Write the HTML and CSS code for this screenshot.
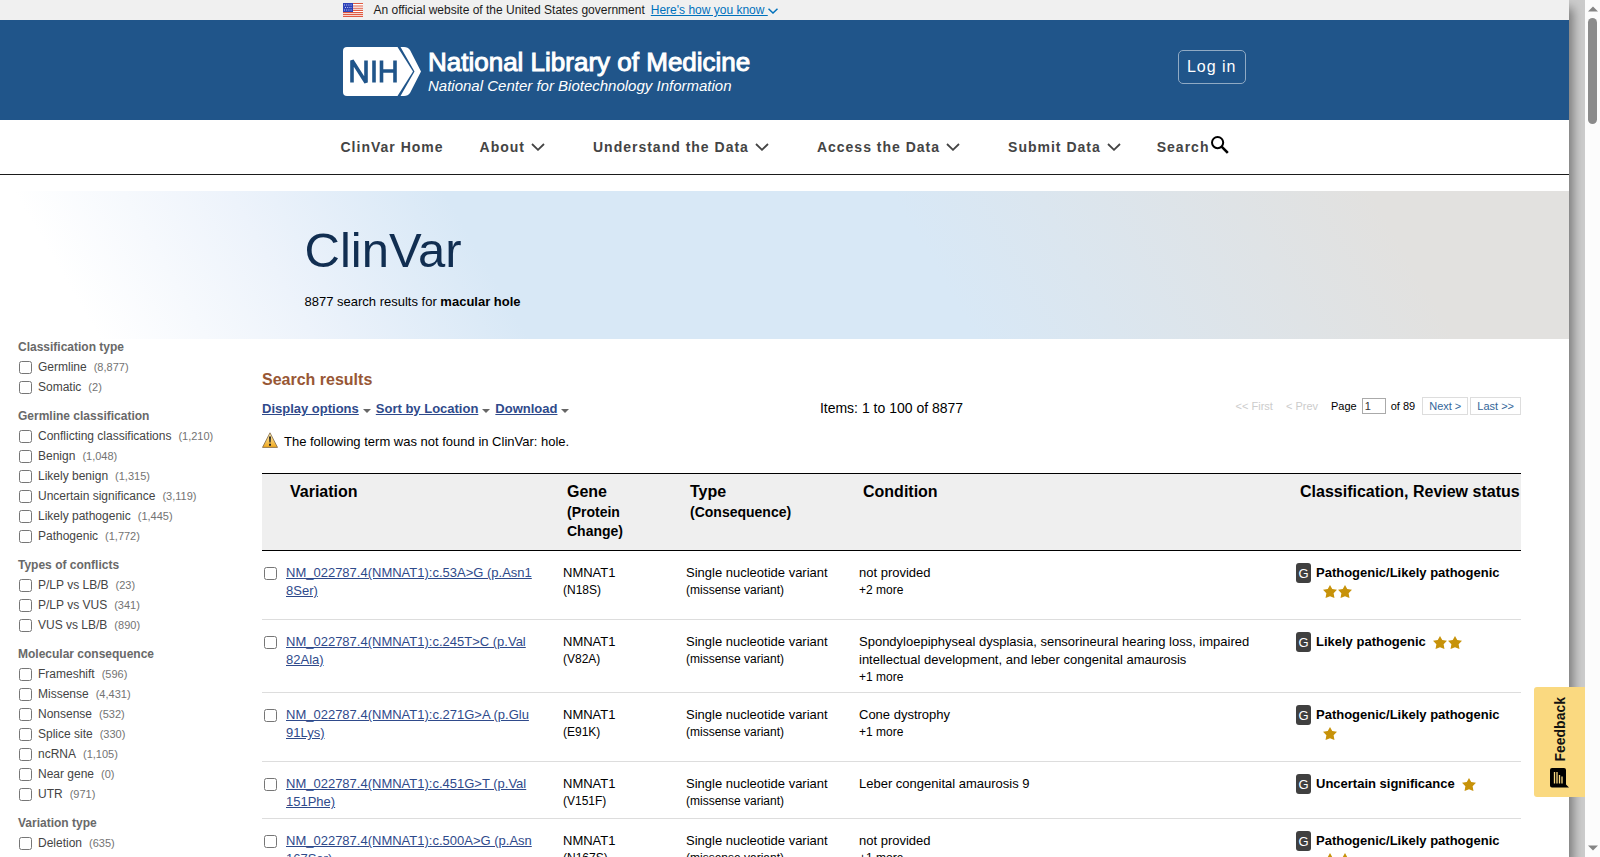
FILE: index.html
```html
<!DOCTYPE html>
<html lang="en">

<head>
    <meta charset="UTF-8">
    <meta name="viewport" content="width=device-width, initial-scale=1.0">
    <title>macular hole - ClinVar - NCBI</title>
    <link rel="stylesheet" href="styles.css">
</head>

<body>
    <svg class="defs" aria-hidden="true">
        <symbol id="star" viewBox="0 0 15 14">
            <path d="M7.5 0 L9.9 4.4 L15 5.2 L11.4 8.8 L12.3 14 L7.5 12 L2.7 14 L3.6 8.8 L0 5.2 L5.1 4.4Z" fill="#c79209" />
        </symbol>
        <symbol id="chevron" viewBox="0 0 14 8">
            <path d="M1 1 L7 6.8 L13 1" fill="none" stroke="currentColor" stroke-width="1.8" />
        </symbol>
        <symbol id="chevron-small" viewBox="0 0 10 6">
            <path d="M.5 .7 L5 5 L9.5 .7" fill="none" stroke="currentColor" stroke-width="1.5" />
        </symbol>
    </svg>

    <div class="page">
        <div class="banner">
            <div class="container">
                <svg class="flag" viewBox="0 0 20 14" aria-hidden="true">
                    <rect width="20" height="14" fill="#fff" />
                    <path d="M0 .5h20M0 3h20M0 5.2h20M0 7.4h20M0 9.6h20M0 11.6h20M0 13.5h20" stroke="#e05a42" stroke-width="1.1" />
                    <rect width="10" height="9" fill="#2c41b8" />
                    <path d="M1 2h8M2 4.5h7M1 7h8" stroke="#c5cbf0" stroke-dasharray="1 1.2" />
                </svg>
                <span>An official website of the United States government</span>
                <a href="#how">Here's how you know <svg class="know-chevron" aria-hidden="true"><use href="#chevron-small" /></svg></a>
            </div>
        </div>

        <header class="header">
            <div class="container">
                <a href="#home" class="logo" aria-label="NCBI home">
                    <svg viewBox="0 0 420 50" width="420" height="50" aria-hidden="true">
                        <path d="M4 0H54.5L70 24.5L54.5 49H4Q0 49 0 45V4Q0 0 4 0Z" fill="#fff" />
                        <path d="M57.5 0H61Q65 0 67 3L78 24.5L67 46Q65 49 61 49H57.5L71.5 24.5Z" fill="#fff" />
                        <path d="M9 35.5V13.5L23 35.5V13.5M31 13.5V35.5M38.5 13.5V35.5M52 13.5V35.5M38.5 24H52" fill="none" stroke="#20558a" stroke-width="3.6" stroke-linejoin="bevel" />
                        <text class="logo-title" x="85" y="24">National Library of Medicine</text>
                        <text class="logo-sub" x="85" y="44">National Center for Biotechnology Information</text>
                    </svg>
                </a>
                <button type="button" class="login">Log in</button>
            </div>
        </header>

        <nav class="nav">
            <div class="container">
                <a href="#clinvar">ClinVar Home</a>
                <a href="#about" class="drop">About <svg aria-hidden="true"><use href="#chevron" /></svg></a>
                <a href="#understand" class="drop">Understand the Data <svg aria-hidden="true"><use href="#chevron" /></svg></a>
                <a href="#access" class="drop">Access the Data <svg aria-hidden="true"><use href="#chevron" /></svg></a>
                <a href="#submit" class="drop">Submit Data <svg aria-hidden="true"><use href="#chevron" /></svg></a>
                <a href="#search" class="search">Search<svg viewBox="0 0 18 18" aria-hidden="true">
                        <circle cx="6.6" cy="6.6" r="5.6" fill="none" stroke="#000" stroke-width="2" />
                        <path d="M10.6 10.6 L16.8 16.8" stroke="#000" stroke-width="2.6" />
                    </svg></a>
            </div>
        </nav>

        <div class="hero">
            <div class="container">
                <h1>ClinVar</h1>
                <p>8877 search results for <b>macular hole</b></p>
            </div>
        </div>

        <div class="content">
            <aside class="filters">
                <h3>Classification type</h3>
                <ul>
                    <li><label><input type="checkbox">Germline <span>(8,877)</span></label></li>
                    <li><label><input type="checkbox">Somatic <span>(2)</span></label></li>
                </ul>
                <h3>Germline classification</h3>
                <ul>
                    <li><label><input type="checkbox">Conflicting classifications <span>(1,210)</span></label></li>
                    <li><label><input type="checkbox">Benign <span>(1,048)</span></label></li>
                    <li><label><input type="checkbox">Likely benign <span>(1,315)</span></label></li>
                    <li><label><input type="checkbox">Uncertain significance <span>(3,119)</span></label></li>
                    <li><label><input type="checkbox">Likely pathogenic <span>(1,445)</span></label></li>
                    <li><label><input type="checkbox">Pathogenic <span>(1,772)</span></label></li>
                </ul>
                <h3>Types of conflicts</h3>
                <ul>
                    <li><label><input type="checkbox">P/LP vs LB/B <span>(23)</span></label></li>
                    <li><label><input type="checkbox">P/LP vs VUS <span>(341)</span></label></li>
                    <li><label><input type="checkbox">VUS vs LB/B <span>(890)</span></label></li>
                </ul>
                <h3>Molecular consequence</h3>
                <ul>
                    <li><label><input type="checkbox">Frameshift <span>(596)</span></label></li>
                    <li><label><input type="checkbox">Missense <span>(4,431)</span></label></li>
                    <li><label><input type="checkbox">Nonsense <span>(532)</span></label></li>
                    <li><label><input type="checkbox">Splice site <span>(330)</span></label></li>
                    <li><label><input type="checkbox">ncRNA <span>(1,105)</span></label></li>
                    <li><label><input type="checkbox">Near gene <span>(0)</span></label></li>
                    <li><label><input type="checkbox">UTR <span>(971)</span></label></li>
                </ul>
                <h3>Variation type</h3>
                <ul>
                    <li><label><input type="checkbox">Deletion <span>(635)</span></label></li>
                    <li><label><input type="checkbox" aria-label="Duplication"></label></li>
                </ul>
            </aside>

            <main class="results">
                <h2>Search results</h2>
                <div class="toolbar">
                    <div class="options">
                        <a href="#display">Display options</a>
                        <a href="#sort">Sort by Location</a>
                        <a href="#download">Download</a>
                    </div>
                    <div class="count">Items: 1 to 100 of 8877</div>
                    <div class="pager">
                        <span class="off">&lt;&lt; First</span>
                        <span class="off">&lt; Prev</span>
                        <label for="pageno">Page</label>
                        <input type="text" id="pageno" value="1">
                        <span class="of">of 89</span>
                        <a href="#next">Next &gt;</a>
                        <a href="#last">Last &gt;&gt;</a>
                    </div>
                </div>
                <div class="warning">
                    <svg viewBox="0 0 16 16" aria-hidden="true">
                        <defs>
                            <linearGradient id="amber" x2="0" y2="1">
                                <stop offset="0" stop-color="#fff0b8" />
                                <stop offset="1" stop-color="#f0a81c" />
                            </linearGradient>
                        </defs>
                        <path d="M8 .8 L15.5 15.4 H.5Z" fill="url(#amber)" stroke="#7d6544" stroke-width=".8" stroke-linejoin="round" />
                        <path d="M7 4.5h2l-.4 6h-1.2zM7 11.8h2v2H7z" fill="#222" />
                    </svg>
                    <span>The following term was not found in ClinVar: hole.</span>
                </div>

                <table>
                    <colgroup>
                        <col class="col-check">
                        <col class="col-variation">
                        <col class="col-gene">
                        <col class="col-type">
                        <col>
                        <col class="col-status">
                    </colgroup>
                    <thead>
                        <tr>
                            <th></th>
                            <th>Variation</th>
                            <th>Gene<small>(Protein<br>Change)</small></th>
                            <th>Type<small>(Consequence)</small></th>
                            <th>Condition</th>
                            <th>Classification, Review status</th>
                        </tr>
                    </thead>
                    <tbody>
                        <tr>
                            <td><input type="checkbox" aria-label="Select c.53A&gt;G"></td>
                            <td><a href="#v1">NM_022787.4(NMNAT1):c.53A&gt;G (p.Asn18Ser)</a></td>
                            <td>NMNAT1<small>(N18S)</small></td>
                            <td>Single nucleotide variant<small>(missense variant)</small></td>
                            <td>not provided<small>+2 more</small></td>
                            <td>
                                <div class="status"><i>G</i>
                                    <div><b>Pathogenic/Likely pathogenic</b><span class="stars"><svg><use href="#star" /></svg><svg><use href="#star" /></svg></span></div>
                                </div>
                            </td>
                        </tr>
                        <tr>
                            <td><input type="checkbox" aria-label="Select c.245T&gt;C"></td>
                            <td><a href="#v2">NM_022787.4(NMNAT1):c.245T&gt;C (p.Val82Ala)</a></td>
                            <td>NMNAT1<small>(V82A)</small></td>
                            <td>Single nucleotide variant<small>(missense variant)</small></td>
                            <td>Spondyloepiphyseal dysplasia, sensorineural hearing loss, impaired intellectual development, and leber congenital amaurosis<small>+1 more</small></td>
                            <td>
                                <div class="status"><i>G</i>
                                    <div><b>Likely pathogenic</b><span class="stars"><svg><use href="#star" /></svg><svg><use href="#star" /></svg></span></div>
                                </div>
                            </td>
                        </tr>
                        <tr>
                            <td><input type="checkbox" aria-label="Select c.271G&gt;A"></td>
                            <td><a href="#v3">NM_022787.4(NMNAT1):c.271G&gt;A (p.Glu91Lys)</a></td>
                            <td>NMNAT1<small>(E91K)</small></td>
                            <td>Single nucleotide variant<small>(missense variant)</small></td>
                            <td>Cone dystrophy<small>+1 more</small></td>
                            <td>
                                <div class="status"><i>G</i>
                                    <div><b>Pathogenic/Likely pathogenic</b><span class="stars"><svg><use href="#star" /></svg></span></div>
                                </div>
                            </td>
                        </tr>
                        <tr>
                            <td><input type="checkbox" aria-label="Select c.451G&gt;T"></td>
                            <td><a href="#v4">NM_022787.4(NMNAT1):c.451G&gt;T (p.Val151Phe)</a></td>
                            <td>NMNAT1<small>(V151F)</small></td>
                            <td>Single nucleotide variant<small>(missense variant)</small></td>
                            <td>Leber congenital amaurosis 9</td>
                            <td>
                                <div class="status"><i>G</i>
                                    <div><b>Uncertain significance</b><span class="stars"><svg><use href="#star" /></svg></span></div>
                                </div>
                            </td>
                        </tr>
                        <tr>
                            <td><input type="checkbox" aria-label="Select c.500A&gt;G"></td>
                            <td><a href="#v5">NM_022787.4(NMNAT1):c.500A&gt;G (p.Asn167Ser)</a></td>
                            <td>NMNAT1<small>(N167S)</small></td>
                            <td>Single nucleotide variant<small>(missense variant)</small></td>
                            <td>not provided<small>+1 more</small></td>
                            <td>
                                <div class="status"><i>G</i>
                                    <div><b>Pathogenic/Likely pathogenic</b><span class="stars"><svg><use href="#star" /></svg><svg><use href="#star" /></svg></span></div>
                                </div>
                            </td>
                        </tr>
                    </tbody>
                </table>
            </main>
        </div>
    </div>

    <button type="button" class="feedback">
        <svg viewBox="0 0 19 20" aria-hidden="true">
            <path d="M2 0H14Q16 0 16 2V16.5L19 19.5H2Q0 19.5 0 17.5V2Q0 0 2 0Z" fill="#000" />
            <path d="M4.5 4V15.5M7 4V15.5M9.5 7V15.5M12 8.5V15.5" stroke="#fad980" stroke-width="1.3" />
        </svg>
        <span>Feedback</span>
    </button>

    <div class="scrollbar" aria-hidden="true">
        <svg viewBox="0 0 10 6"><path d="M0 5.5 L5 0.5 L10 5.5Z" fill="#858585" /></svg>
        <div class="thumb"></div>
        <svg viewBox="0 0 10 6"><path d="M0 .5 L5 5.5 L10 .5Z" fill="#858585" /></svg>
    </div>
</body>

</html>
```

FILE: styles.css
```css
* {
    box-sizing: border-box;
    margin: 0;
    padding: 0;
}

html,
body {
    height: 100%;
}

body {
    display: flex;
    overflow: hidden;
    background: #ccc;
    font-family: "Liberation Sans", Arial, sans-serif;
    font-size: 13px;
    line-height: 18px;
    color: #000;
}

button,
input {
    font-family: inherit;
}

.defs {
    position: absolute;
    width: 0;
    height: 0;
}

.page {
    flex: 1;
    min-width: 0;
    margin-right: 16px;
    background: #fff;
    box-shadow: 4px 8px 10px #777;
}

.container {
    max-width: 960px;
    margin: 0 auto;
}

/* government banner */
.banner {
    background: #f0f0f0;
    font-size: 12px;
    line-height: 20px;
    color: #1b1b1b;
}

.banner .container {
    display: flex;
    align-items: center;
    padding-left: 38px;
}

.flag {
    width: 20px;
    height: 14px;
    margin-right: 11px;
}

.banner a {
    margin-left: 6px;
    color: #0071bc;
}

.know-chevron {
    width: 10px;
    height: 6px;
    vertical-align: middle;
}

.header {
    background: #20558a;
}

.header .container {
    display: flex;
    justify-content: space-between;
    align-items: center;
    height: 100px;
    padding: 0 19px 0 38px;
}

.logo {
    margin-top: 4px;
}

.logo svg {
    display: block;
}

.logo-title {
    font-size: 26px;
    fill: #fff;
    stroke: #fff;
    stroke-width: 1px;
}

.logo-sub {
    font-size: 15px;
    font-style: italic;
    fill: #fff;
}

.login {
    height: 34px;
    padding: 0 8px;
    margin-bottom: 6px;
    border: 1px solid #90aac4;
    border-radius: 5px;
    background: none;
    color: #fff;
    font-size: 16px;
    letter-spacing: 1px;
}

.nav {
    border-bottom: 1px solid #1b1b1b;
}

.nav .container {
    display: flex;
    align-items: center;
    gap: 36px;
    height: 54px;
    padding-left: 36px;
}

.nav a {
    display: flex;
    align-items: center;
    gap: 6px;
    color: #444;
    font-size: 14px;
    font-weight: bold;
    letter-spacing: 1px;
    text-decoration: none;
    white-space: nowrap;
}

.nav .drop svg {
    width: 14px;
    height: 8px;
}

.nav .drop + .drop {
    margin-left: 12px;
}

.nav .search {
    gap: 2px;
}

.nav .search svg {
    width: 18px;
    height: 18px;
    margin-bottom: 5px;
}

.hero {
    height: 148px;
    margin-top: 16px;
    padding-top: 31px;
    background: linear-gradient(60deg, #fff 6%, #edf3fb 19%, #d8e8f6 32%, #d8e8f6 59%, #e2e1df 88%);
}

.hero h1 {
    color: #112e51;
    font-size: 49px;
    font-weight: normal;
    line-height: 56px;
}

.hero p {
    margin-top: 15px;
}

.content {
    display: flex;
}

/* left column */
.filters {
    width: 262px;
    flex-shrink: 0;
    padding: 1px 0 0 18px;
    color: #444;
    font-size: 12px;
}

.filters h3 {
    margin-bottom: 3px;
    color: #696969;
    font-size: 12px;
    line-height: 14px;
}

.filters ul {
    list-style: none;
    margin-bottom: 12px;
}

.filters label {
    display: flex;
    align-items: center;
    height: 20px;
}

.filters input {
    width: 13px;
    height: 13px;
    margin: 0 6px 0 1px;
}

.filters span {
    margin-left: 7px;
    color: #737373;
    font-size: 11px;
}

/* results */
.results {
    flex: 1;
    min-width: 0;
    padding: 31px 48px 0 0;
}

.results h2 {
    color: #985735;
    font-size: 16px;
    line-height: 20px;
}

.toolbar {
    display: grid;
    grid-template-columns: 1fr auto 1fr;
    align-items: center;
    margin-top: 7px;
    height: 22px;
}

.options {
    display: flex;
    gap: 5px;
    margin-top: 2px;
}

.options a {
    color: #2f4a8b;
    font-weight: bold;
}

.options a::after {
    content: "";
    display: inline-block;
    margin-left: 4px;
    border: 4px solid transparent;
    border-top-color: #666;
    border-bottom: 0;
}

.count {
    font-size: 14px;
}

.pager {
    display: flex;
    justify-content: flex-end;
    align-items: center;
    margin-bottom: 4px;
    font-size: 11px;
}

.pager .off {
    margin-right: 13px;
    color: #ccc;
}

.pager input {
    width: 24px;
    height: 16px;
    margin: 0 5px;
    padding: 0 2px;
    border: 1px solid #aaa;
    font-size: 11px;
    color: #333;
}

.pager .of {
    margin-right: 7px;
}

.pager a {
    padding: 0 6px;
    border: 1px solid #ddd;
    color: #369;
    line-height: 16px;
    text-decoration: none;
}

.pager a + a {
    margin-left: 2px;
}

.warning {
    display: flex;
    align-items: center;
    gap: 6px;
    height: 18px;
    margin: 14px 0 22px;
}

.warning svg {
    width: 16px;
    height: 16px;
    margin-bottom: 4px;
}

table {
    width: 100%;
    table-layout: fixed;
    border-collapse: collapse;
}

.col-check {
    width: 24px;
}

.col-variation {
    width: 277px;
}

.col-gene {
    width: 123px;
}

.col-type {
    width: 173px;
}

.col-status {
    width: 225px;
}

th {
    height: 77px;
    padding: 8px 0 0 4px;
    border-top: 1px solid #000;
    border-bottom: 1px solid #000;
    background: #efefef;
    font-size: 16px;
    line-height: 20px;
    text-align: left;
    vertical-align: top;
    white-space: nowrap;
}

th small {
    display: block;
    margin-top: 1px;
    font-size: 14px;
    line-height: 19px;
}

td {
    padding: 13px 0 7px;
    border-bottom: 1px solid #ddd;
    vertical-align: top;
}

td small {
    display: block;
    font-size: 12px;
    line-height: 16px;
}

td:nth-child(2) {
    padding-right: 31px;
    word-break: break-all;
}

td:nth-child(5) {
    padding-right: 32px;
}

td:nth-child(6) {
    padding-right: 8px;
}

td a {
    color: #2f4a8b;
}

td input {
    display: block;
    width: 13px;
    height: 13px;
    margin: 3px 0 0 2px;
}

.status {
    display: flex;
    align-items: flex-start;
    gap: 5px;
}

.status > i {
    width: 15px;
    height: 20px;
    margin-top: -1px;
    border-radius: 3px;
    background: #404040;
    color: #fff;
    font-style: normal;
    line-height: 21px;
    text-align: center;
}

.status > div {
    display: flex;
    flex-wrap: wrap;
    flex: 1;
}

/* the bottom margin only shows up in the row when the stars wrap */
.stars {
    display: flex;
    align-items: center;
    gap: 1px;
    height: 18px;
    margin: 0 0 12px 7px;
}

.stars svg {
    width: 14px;
    height: 13px;
}

.feedback {
    position: fixed;
    right: 15px;
    bottom: 60px;
    display: flex;
    flex-direction: column-reverse;
    align-items: center;
    justify-content: space-between;
    width: 51px;
    height: 110px;
    padding: 10px 0 9px;
    border: 0;
    border-radius: 3px 0 0 3px;
    background: #fad980;
    color: #111;
    font-size: 14px;
    font-weight: bold;
}

.feedback span {
    writing-mode: vertical-rl;
    transform: rotate(180deg);
}

.feedback svg {
    width: 19px;
    height: 20px;
}

.scrollbar {
    display: flex;
    flex-direction: column;
    align-items: center;
    width: 15px;
    padding: 6px 0;
    background: #fcfcfc;
    z-index: 1;
}

.scrollbar svg {
    width: 10px;
    height: 6px;
}

.scrollbar .thumb {
    width: 9px;
    height: 106px;
    margin: 6px 0 auto;
    border-radius: 5px;
    background: #8b8b8b;
}
```
